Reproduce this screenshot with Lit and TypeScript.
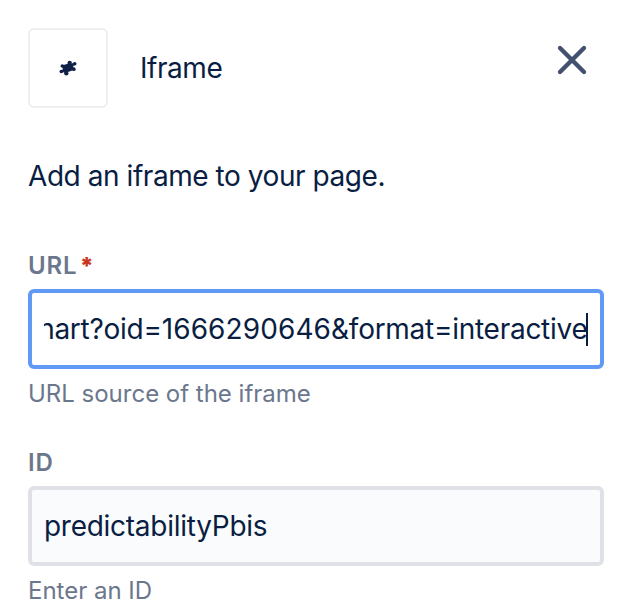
import { LitElement, html, css, nothing } from "lit";
import { customElement, property } from "lit/decorators.js";

@customElement("config-field")
class ConfigField extends LitElement {
  @property() label = "";
  @property() value = "";
  @property() hint = "";
  @property({ type: Boolean }) required = false;
  @property({ type: Boolean, reflect: true }) active = false;

  static styles = css`
    :host { display: block; height: 197px; }
    .label { height: 32px; line-height: 34px; font-size: 24px; font-weight: 620; color: #6b778c; display: flex; letter-spacing: 0.8px; }
    .star { color: #ca3521; margin-left: 2.5px; font-weight: 900; font-size: 23px; }
    .box {
      box-sizing: border-box; height: 80px; margin-top: 8px; padding: 0 12px;
      border: 4px solid #dfe1e6; border-radius: 6px; background: #fafbfc;
      display: flex; align-items: center;
    }
    :host([active]) .box { border-color: #6199f7; background: #fff; }
    .clip { flex: 1; min-width: 0; overflow: hidden; display: flex; align-items: center; height: 40px; }
    :host([active]) .clip { justify-content: flex-end; }
    .value { flex: none; white-space: nowrap; font-size: 28px; line-height: 40px; color: #091e42; letter-spacing: -0.27px; }
    .digits { letter-spacing: 0.1px; }
    .caret { flex: none; width: 2px; height: 33px; margin-left: -1.5px; background: #091e42; }
    .hint { margin-top: 9px; height: 32px; line-height: 32px; font-size: 24px; color: #6b778c; letter-spacing: -0.01px; }
  `;

  render() {
    const parts = this.value.split(/(\d+)/);
    return html`
      <div class="label">${this.label}${this.required ? html`<span class="star">*</span>` : nothing}</div>
      <div class="box">
        <div class="clip">
          <span class="value">${parts.map((p) => (/^\d/.test(p) ? html`<span class="digits">${p}</span>` : p))}</span>
          ${this.active ? html`<span class="caret"></span>` : nothing}
        </div>
      </div>
      <div class="hint">${this.hint}</div>
    `;
  }
}

@customElement("app-root")
class AppRoot extends LitElement {
  static styles = css`
    :host {
      display: block; box-sizing: border-box; width: 620px; height: 610px; overflow: hidden;
      padding: 28px 16px 0 28px; background: #fff; color: #091e42;
      font-family: Inter, "Liberation Sans", sans-serif; font-weight: 440;
    }
    .header { display: flex; align-items: center; height: 80px; }
    .tile {
      box-sizing: border-box; width: 80px; height: 80px; border: 2px solid #efeff0; border-radius: 6px;
      display: flex; align-items: center; justify-content: center;
    }
    .title { flex: 1; margin-left: 32px; font-size: 28px; line-height: 42px; letter-spacing: -0.45px; }
    .close { margin: 0 16px 16px 0; display: block; }
    .intro { margin-top: 48px; height: 40px; font-size: 28px; line-height: 41px; letter-spacing: -0.44px; white-space: nowrap; }
    .fields { margin-top: 53px; }
    svg { display: block; }
  `;

  render() {
    return html`
      <div class="header">
        <div class="tile">
          <svg width="20" height="20" viewBox="114 114 60 60" fill="#0f2146">
            <path d="M129 138 L144 134 156 133 159 148 148 152 133 156Z" stroke="#0f2146" stroke-width="5" stroke-linejoin="round" />
            <circle cx="127" cy="138" r="5.500" />
            <circle cx="124" cy="154.500" r="5.500" />
            <circle cx="139" cy="160" r="6.500" />
            <circle cx="149" cy="128.500" r="6.500" />
            <circle cx="164" cy="131.500" r="5.500" />
            <circle cx="161.500" cy="147.500" r="5.500" />
            <path d="M125 154 137 148M161 132 152 139" stroke="#0f2146" stroke-width="7" />
          </svg>
        </div>
        <div class="title">Iframe</div>
        <svg class="close" width="32" height="32" viewBox="0 0 32 32" fill="none" stroke="#42526e" stroke-width="4.400" stroke-linecap="round">
          <path d="M4 4 28 28M28 4 4 28" />
        </svg>
      </div>
      <div class="intro">Add an iframe to your page.</div>
      <div class="fields">
        <config-field label="URL" required active value="chart?oid=1666290646&amp;format=interactive" hint="URL source of the iframe"></config-field>
        <config-field label="ID" value="predictabilityPbis" hint="Enter an ID"></config-field>
      </div>
    `;
  }
}
